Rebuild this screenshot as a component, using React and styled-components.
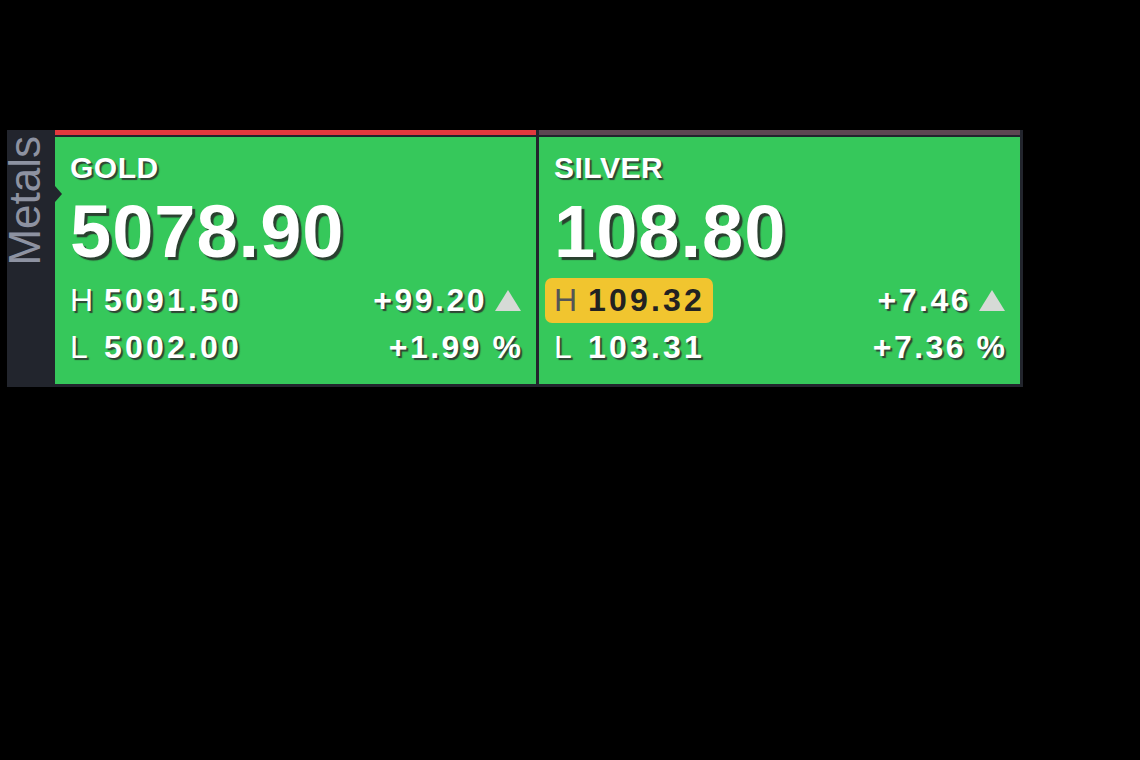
import React from "react";
import styled, { createGlobalStyle } from "styled-components";

const Global = createGlobalStyle`
  html, body {
    margin: 0;
    background: #000;
    font-family: "Liberation Sans", Arial, sans-serif;
  }
`;

const Board = styled.div`
  display: flex;
  width: 1016px;
  height: 257px;
  margin: 130px 0 0 7px;
  background-color: #22252d;
`;

const Side = styled.div`
  position: relative;
  width: 48px;
  flex-shrink: 0;
  display: flex;
  flex-direction: column;
  align-items: flex-start;
  padding-top: 6px;
  box-sizing: border-box;
`;

const SideLabel = styled.div`
  writing-mode: vertical-rl;
  transform: rotate(180deg);
  font-size: 44px;
  line-height: 44px;
  color: #8d92a1;
  margin-left: -4px;
`;

const Pointer = styled.div`
  position: absolute;
  right: -7px;
  top: 56px;
  width: 0;
  height: 0;
  border-top: 8px solid transparent;
  border-bottom: 8px solid transparent;
  border-left: 7px solid #22252d;
  z-index: 2;
`;

const Card = styled.div`
  width: 481px;
  display: flex;
  flex-direction: column;
  border-right: 3px solid #22252d;
`;

const TopBar = styled.div`
  height: 5px;
  margin-bottom: 2px;
  background-color: ${(p) => p.$color};
`;

const Body = styled.div`
  height: 247px;
  box-sizing: border-box;
  background-color: #36c85b;
  padding: 16px 15px 14px 15px;
  color: #fff;
  text-shadow: 2px 2px 1px rgba(45, 45, 45, 0.85);
`;

const Name = styled.div`
  font-size: 30px;
  line-height: 30px;
  font-weight: 700;
  letter-spacing: 0.5px;
`;

const Price = styled.div`
  margin-top: 12px;
  font-size: 74px;
  line-height: 74px;
  font-weight: 700;
  letter-spacing: 1px;
  text-shadow: 3px 3px 1px rgba(40, 40, 40, 0.85);
`;

const Stats = styled.div`
  margin-top: 9px;
  display: flex;
  flex-direction: column;
  gap: 2px;
`;

const StatRow = styled.div`
  display: flex;
  justify-content: space-between;
  align-items: center;
  height: 45px;
  font-size: 32px;
  letter-spacing: 2.5px;
`;

const Range = styled.div`
  display: flex;
  align-items: center;
  height: 45px;
  margin-left: -9px;
  padding: 0 8px 0 9px;
  border-radius: 7px;
  background-color: ${(p) => (p.$hi ? "#f1c52f" : "transparent")};
  color: ${(p) => (p.$hi ? "#222" : "#fff")};
  text-shadow: ${(p) => (p.$hi ? "none" : "inherit")};
`;

const Label = styled.span`
  width: 34px;
  font-weight: 400;
  letter-spacing: 0;
  color: ${(p) => (p.$hi ? "#555" : "inherit")};
`;

const Value = styled.span`
  font-weight: 700;
  letter-spacing: 3.2px;
`;

const Change = styled.div`
  display: flex;
  align-items: center;
  gap: 8px;
  font-weight: 700;
  margin-right: -2.5px;
`;

const Unit = styled.span`
  margin-left: -1px;
`;

const Arrow = () => (
  <svg width="26" height="21" viewBox="0 0 26 21" style={{ marginRight: 2.5 }}>
    <polygon points="13,0 26,21 0,21" fill="#d6dad6" />
  </svg>
);

const metals = [
  {
    name: "GOLD",
    bar: "#e2393d",
    price: "5078.90",
    high: "5091.50",
    low: "5002.00",
    change: "+99.20",
    pct: "+1.99",
    hiMark: false,
  },
  {
    name: "SILVER",
    bar: "#5d4752",
    price: "108.80",
    high: "109.32",
    low: "103.31",
    change: "+7.46",
    pct: "+7.36",
    hiMark: true,
  },
];

function Quote({ m }) {
  return (
    <Card>
      <TopBar $color={m.bar} />
      <Body>
        <Name>{m.name}</Name>
        <Price>{m.price}</Price>
        <Stats>
          <StatRow>
            <Range $hi={m.hiMark}>
              <Label $hi={m.hiMark}>H</Label>
              <Value>{m.high}</Value>
            </Range>
            <Change>
              {m.change}
              <Arrow />
            </Change>
          </StatRow>
          <StatRow>
            <Range>
              <Label>L</Label>
              <Value>{m.low}</Value>
            </Range>
            <Change>
              <span>
                {m.pct} <Unit>%</Unit>
              </span>
            </Change>
          </StatRow>
        </Stats>
      </Body>
    </Card>
  );
}

export default function App() {
  return (
    <>
      <Global />
      <Board>
        <Side>
          <SideLabel>Metals</SideLabel>
          <Pointer />
        </Side>
        {metals.map((m) => (
          <Quote key={m.name} m={m} />
        ))}
      </Board>
    </>
  );
}
